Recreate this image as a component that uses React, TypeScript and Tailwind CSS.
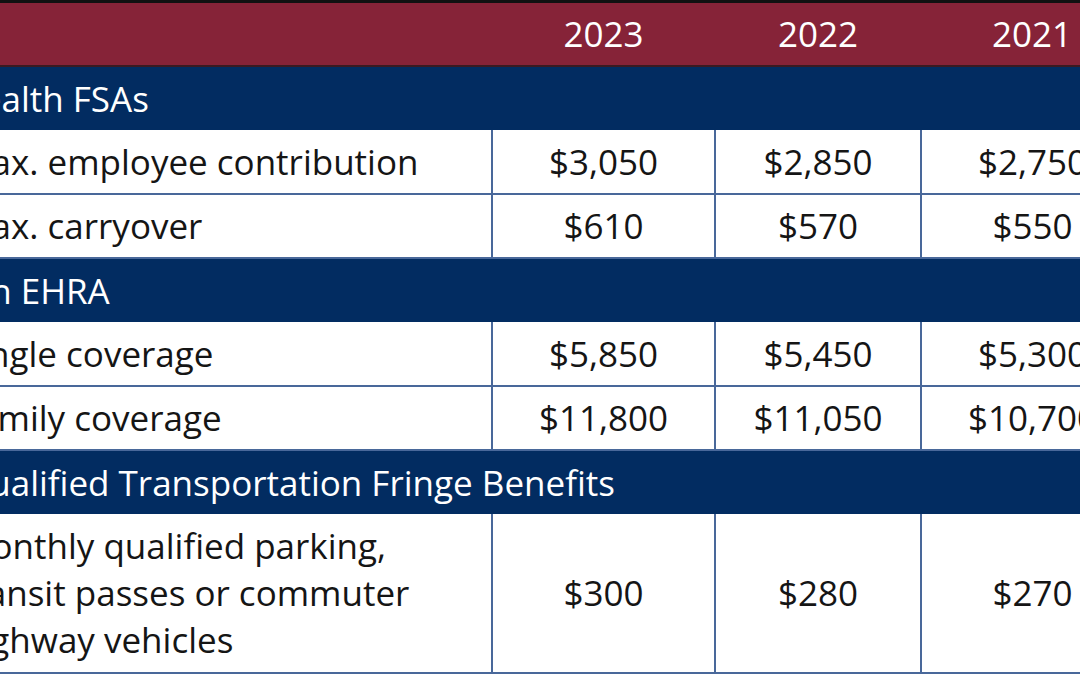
import React from 'react';

type Row =
  | { kind: 'section'; label: string; pad?: string }
  | { kind: 'data'; label: string[]; values: [string, string, string]; tall?: boolean };

const years = ['2023', '2022', '2021'];

const rows: Row[] = [
  { kind: 'section', label: 'Health FSAs', pad: 'pl-[1px]' },
  { kind: 'data', label: ['Max. employee contribution'], values: ['$3,050', '$2,850', '$2,750'] },
  { kind: 'data', label: ['Max. carryover'], values: ['$610', '$570', '$550'] },
  { kind: 'section', label: 'An EHRA', pad: 'pl-[13px]' },
  { kind: 'data', label: ['Single coverage'], values: ['$5,850', '$5,450', '$5,300'] },
  { kind: 'data', label: ['Family coverage'], values: ['$11,800', '$11,050', '$10,700'] },
  { kind: 'section', label: 'Qualified Transportation Fringe Benefits', pad: 'pl-[7px]' },
  {
    kind: 'data',
    label: ['Monthly qualified parking,', 'transit passes or commuter', 'highway vehicles'],
    values: ['$300', '$280', '$270'],
    tall: true,
  },
];

export default function App() {
  return (
    <div
      className="w-[1080px] h-[675px] overflow-hidden bg-white"
      style={{ fontFamily: '"Open Sans", "Noto Sans", sans-serif' }}
    >
      <table className="ml-[-45px] border-collapse text-[35px] leading-[47px] text-[#151515] table-fixed w-[1188px]">
        <colgroup>
          <col className="w-[537px]" />
          <col className="w-[223px]" />
          <col className="w-[206px]" />
          <col className="w-[222px]" />
        </colgroup>
        <thead>
          <tr className="bg-[#862338] text-white border-t-[3px] border-t-[#111] border-b-2 border-b-[#3a1a22] h-[64px]">
            <th className="font-normal" />
            {years.map((y) => (
              <th key={y} className="font-normal text-center">
                {y}
              </th>
            ))}
          </tr>
        </thead>
        <tbody>
          {rows.map((row, i) =>
            row.kind === 'section' ? (
              <tr key={i} className="bg-[#022c61] text-white h-[64px]">
                <td colSpan={4} className={`${row.pad} text-left whitespace-nowrap`}>
                  {row.label}
                </td>
              </tr>
            ) : (
              <tr key={i} className={row.tall ? 'h-[159px]' : 'h-[64px]'}>
                <td className="pl-[5px] text-left whitespace-nowrap border-b-2 border-[#49689a]">
                  {row.label.map((l) => (
                    <div key={l}>{l}</div>
                  ))}
                </td>
                {row.values.map((v, j) => (
                  <td
                    key={j}
                    className="text-center border-l-2 border-b-2 border-[#49689a]"
                  >
                    {v}
                  </td>
                ))}
              </tr>
            )
          )}
        </tbody>
      </table>
    </div>
  );
}
